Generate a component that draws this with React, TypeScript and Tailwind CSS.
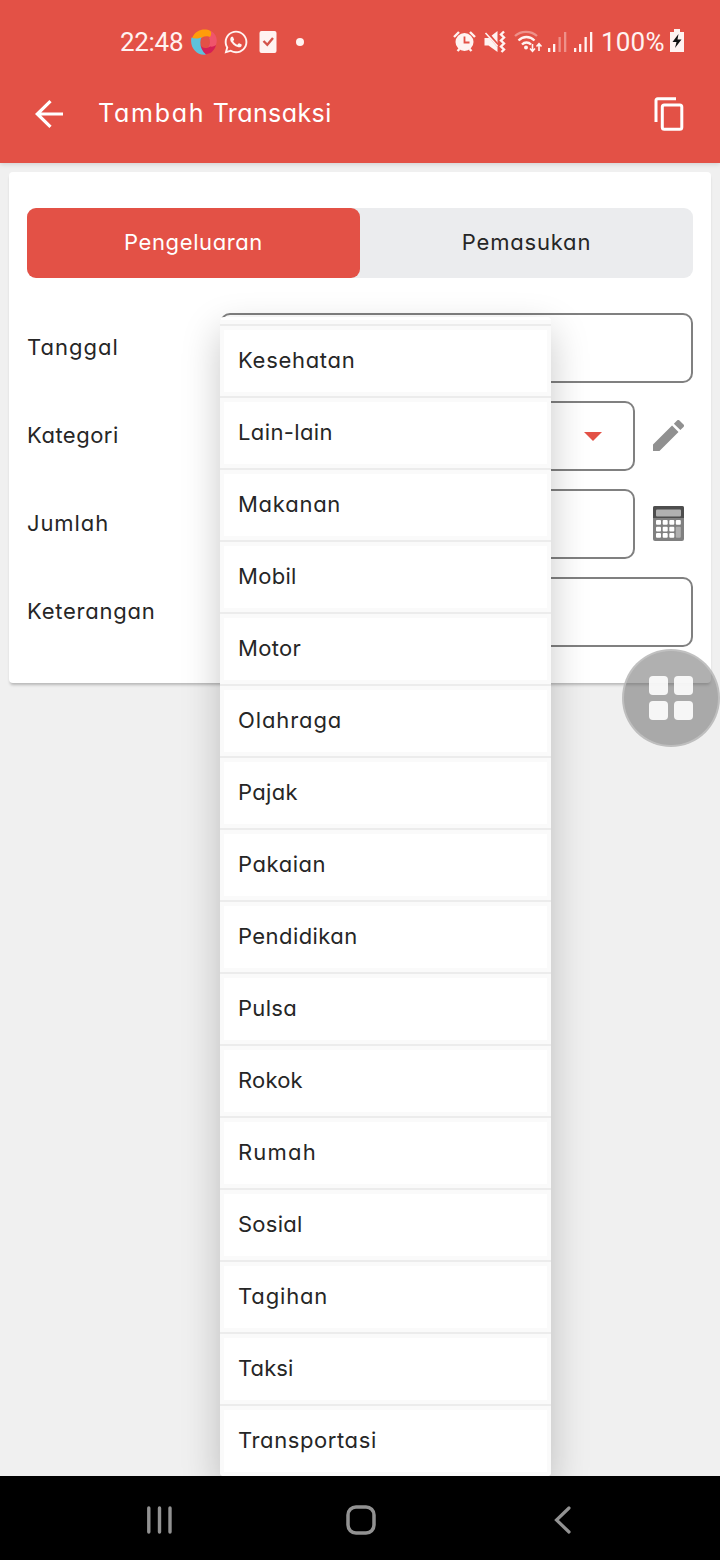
import React from "react";
import { FaWhatsapp } from "react-icons/fa";

type Entry = { name: string; track: string };

const categories: Entry[] = [
  { name: "Kesehatan", track: "tracking-[0.7px]" },
  { name: "Lain-lain", track: "tracking-[0.38px]" },
  { name: "Makanan", track: "tracking-[0.75px]" },
  { name: "Mobil", track: "tracking-[0.3px]" },
  { name: "Motor", track: "tracking-[0.3px]" },
  { name: "Olahraga", track: "tracking-[0.9px]" },
  { name: "Pajak", track: "tracking-[0.3px]" },
  { name: "Pakaian", track: "tracking-[0.55px]" },
  { name: "Pendidikan", track: "tracking-[0.43px]" },
  { name: "Pulsa", track: "tracking-[0.3px]" },
  { name: "Rokok", track: "tracking-[0.2px]" },
  { name: "Rumah", track: "tracking-[1.2px]" },
  { name: "Sosial", track: "tracking-[0.25px]" },
  { name: "Tagihan", track: "tracking-[0.85px]" },
  { name: "Taksi", track: "tracking-[0.1px]" },
  { name: "Transportasi", track: "tracking-[0.6px]" },
];

function StatusBar() {
  return (
    <div className="flex h-[83px] items-center pl-[120px] font-[Roboto,sans-serif] text-[26px] font-normal leading-none text-[#fff3f1]">
      <span className="w-[71px] tracking-[-0.3px]">22:48</span>
      <svg className="h-[26px] w-[26px] shrink-0" viewBox="0 0 26 26">
        <path d="M1 9C4 2 10 0 15 0.500c5 0.500 7 3.500 6 8.500-3-2-7-2.500-10-0.500-3 2-6 2.500-10 0.500Z" fill="#ff9d0a" />
        <path d="M20 2c5 3 7 8 5 14-2 3-6 3-8 2.500 2-2 2.500-6 1-9.500 2-1 2.500-4 2-7Z" fill="#f0546b" />
        <path d="M9 15c1 4 6 5.500 10 2.500 3 0.500 5-0.500 6-1.500-2 7-7 10-13 9-3-3-4-6-3-10Z" fill="#d51f55" />
        <path d="M0.500 8.500c3 1.500 7 1.500 10-0.500-2.500 6-1 13 4.500 17.500C7 27.500-2 19 0.500 8.500Z" fill="#5dc2dc" />
        <path d="M10.500 10c3-2 6-1.500 7.500 0.500 1 3 0 6-2 7.500-3 0-5-1-6-3Z" fill="#e35146" />
      </svg>
      <FaWhatsapp className="ml-[6px] h-[26px] w-[26px] shrink-0" />
      <svg className="ml-[10px] h-[22px] w-[19px] shrink-0" viewBox="0 0 19 22">
        <rect x="0.500" width="17" height="22" rx="2" fill="#fff3f1" />
        <path d="M4.500 10l3.800 3.800L14 7" fill="none" stroke="#d4544b" strokeWidth="2.4" />
      </svg>
      <span className="ml-[18px] h-2 w-2 shrink-0 rounded-full bg-[#fff3f1]" />
      <svg className="ml-[149px] h-[24px] w-[143px] shrink-0" viewBox="453 29 143 24" fill="#fff3f1">
        <circle cx="464.5" cy="41" r="9" />
        <path d="M454 36l5-5M475 36l-5-5M457.5 50l2-2M471.500 50l-2-2" stroke="#fff3f1" strokeWidth="2.400" />
        <path d="M464.500 35.500v6h5" fill="none" stroke="#e35146" strokeWidth="1.800" />
        <path d="M484.500 37h4l9-7v21l-9-6.500h-4Z" />
        <path d="M485 29.500l13 15" stroke="#e35146" strokeWidth="3.200" />
        <path d="M485.500 32l12 13" stroke="#fff3f1" strokeWidth="1.600" />
        <path d="M504 30.500l-3 3 3 3-3 3 3 3-3 3 3 3-2.500 2.500" fill="none" stroke="#fff3f1" strokeWidth="2.400" />
        <g fill="none" stroke="#fff3f1" strokeWidth="2.300">
          <path d="M515 35c6-5.500 16-5.500 22 0" opacity="0.4" />
          <path d="M518.500 39.500c4.500-4.700 11.500-4.700 16 0" />
          <path d="M522 43.500c2.500-2.700 6.500-2.700 9 0" />
          <path d="M532.500 43v7M530 47.500l2.500 2.700 2.500-2.700M539 50v-7M536.500 45.500l2.500-2.700 2.500 2.700" strokeWidth="1.600" />
        </g>
        <circle cx="526" cy="46.500" r="2" />
        <path d="M548 47h2.300v4H548ZM553 43h2.300v8H553Z" />
        <path d="M558.500 36h2.300v15h-2.300ZM564 31h2.300v20H564Z" opacity="0.4" />
        <path d="M574 47h2.300v4H574ZM579 43h2.300v8H579ZM584.500 36h2.300v15h-2.300ZM590 31h2.300v20H590Z" />
      </svg>
      <span className="ml-[5px] w-[69px] shrink-0 tracking-[0.2px]">100%</span>
      <svg className="h-[23px] w-[14px] shrink-0 -translate-y-px" viewBox="0 0 14 23">
        <path d="M4 0h6v3h4v20H0V3h4Z" fill="#fff3f1" />
        <path d="M8.500 5L2.500 13h4L5 19l6.500-8.500h-4Z" fill="#111" />
      </svg>
    </div>
  );
}

function AppBar() {
  return (
    <div className="flex h-[80px] items-center pb-[19px] pl-[35px] pr-[36px] text-white">
      <svg className="h-[28px] w-[28px]" viewBox="0 0 28 28" fill="none" stroke="white" strokeWidth="3.200">
        <path d="M28 14H3M15.500 1.200L2.300 14l13.200 12.800" />
      </svg>
      <h1 className="ml-[35px] flex-1 text-[25px]">
        <span className="tracking-[1.75px]">Tambah</span>
        <span className="tracking-[0.4px]"> Transaksi</span>
      </h1>
      <svg className="h-[34px] w-[30px]" viewBox="0 0 30 34" fill="none" stroke="white" strokeWidth="3">
        <path d="M2 25V3.500Q2 1.800 3.700 1.800H22" />
        <rect x="8.300" y="8" width="19.500" height="24.300" rx="2" />
      </svg>
    </div>
  );
}

function Field({ label, track, children }: { label: string; track: string; children?: React.ReactNode }) {
  return (
    <div className="flex h-[70px] items-center">
      <label className={`w-[193px] shrink-0 pb-[2px] ${track}`}>{label}</label>
      <div className="flex h-full flex-1 items-center justify-end rounded-[10px] border-2 border-[#808080] pr-[31px]">
        {label === "Kategori" && (
          <svg className="h-[9px] w-[18px]" viewBox="0 0 18 9">
            <path d="M0 0h18L9 9Z" fill="#e35146" />
          </svg>
        )}
      </div>
      {children}
    </div>
  );
}

function PencilIcon() {
  return (
    <svg className="mb-[1px] ml-[18px] mr-[9px] h-[31px] w-[31px] shrink-0" viewBox="3 3 18 18" fill="#909090">
      <path d="M3 17.250V21h3.750L17.810 9.940l-3.750-3.750L3 17.250zM20.710 7.040a1 1 0 0 0 0-1.410l-2.340-2.340a1 1 0 0 0-1.410 0l-1.830 1.830 3.750 3.750 1.830-1.830z" />
    </svg>
  );
}

function CalculatorIcon() {
  return (
    <svg className="mb-[1px] ml-[18px] mr-[9px] h-[35px] w-[31px] shrink-0" viewBox="0 0 31 35">
      <rect width="31" height="35" rx="2" fill="#808080" />
      <path d="M0 12V2Q0 0 2 0h27q2 0 2 2v10Z" fill="#4d4d4d" />
      <rect x="3" y="3.500" width="25" height="7" rx="1" fill="#b0b0b0" />
      <g fill="#fff">
        {[14, 20.7, 27].map((y) =>
          [3, 9.700, 16.300, 22.800].map((x) =>
            x > 20 && y > 15 ? null : <rect key={`${x}-${y}`} x={x} y={y} width="5" height="4.800" rx="1" />
          )
        )}
      </g>
      <rect x="22.800" y="20.700" width="5" height="11" rx="1" fill="#b0b0b0" />
    </svg>
  );
}

function CategoryMenu() {
  return (
    <ul className="absolute left-[220px] top-[154px] w-[331px] overflow-hidden rounded-[4px] bg-white shadow-[0_14px_38px_rgba(0,0,0,0.22)]">
      <li className="h-[7px] border-b-4 border-[#fafafa]" />
      {categories.map((c) => (
        <li key={c.name} className="h-[72px] border-t-2 border-[#ececec]">
          <div className={`flex h-[70px] items-center border-4 border-[#fafafa] pb-[3px] pl-[14px] ${c.track}`}>{c.name}</div>
        </li>
      ))}
    </ul>
  );
}

function AssistButton() {
  return (
    <div className="absolute left-[622px] top-[486px] grid h-[98px] w-[98px] grid-cols-[19px_19px] place-content-center gap-x-[6px] gap-y-[6px] rounded-full border-2 border-[#c8c8c8]/70 bg-[#686868]/52">
      <i className="h-[19px] w-[19px] rounded-[4px] bg-white/90" />
      <i className="h-[19px] w-[19px] rounded-[4px] bg-white/90" />
      <i className="h-[19px] w-[19px] rounded-[4px] bg-white/90" />
      <i className="h-[19px] w-[19px] rounded-[4px] bg-white/90" />
    </div>
  );
}

function NavigationBar() {
  return (
    <nav className="flex h-[84px] items-center bg-black pl-[146px]">
      <svg className="mt-[3px] h-[28px] w-[27px]" viewBox="0 0 27 28" fill="none" stroke="#929292" strokeWidth="3.400" strokeLinecap="round">
        <path d="M2.800 2v24M13.500 2v24M24 2v24" />
      </svg>
      <svg className="ml-[173px] mt-[3px] h-[30px] w-[30px]" viewBox="0 0 30 30" fill="none" stroke="#929292" strokeWidth="3.500">
        <rect x="2" y="2" width="26" height="26" rx="8" />
      </svg>
      <svg className="ml-[178px] mt-[3px] h-[28px] w-[17px]" viewBox="0 0 17 28" fill="none" stroke="#929292" strokeWidth="3.200" strokeLinecap="round">
        <path d="M15 2L2.500 14 15 26" />
      </svg>
    </nav>
  );
}

export default function App() {
  return (
    <div className="flex h-[1560px] w-[720px] flex-col overflow-hidden bg-[#f0f0f0] font-[Inter,sans-serif] text-[22px] font-normal leading-none text-[#262626] [font-feature-settings:'cv11']">
      <header className="relative z-10 h-[163px] shrink-0 bg-[#e35146] shadow-[0_1px_5px_rgba(0,0,0,0.15)]">
        <StatusBar />
        <AppBar />
      </header>
      <main className="relative flex-1 overflow-hidden px-[9px] pt-[9px]">
        <section className="h-[511px] rounded-[4px] bg-white px-[18px] pt-[36px] shadow-[0_3px_3px_-1px_rgba(0,0,0,0.24)]">
          <div className="flex h-[70px] rounded-[9px] bg-[#ebecee]">
            <button className="flex-1 rounded-[9px] bg-[#e35146] pb-[2px] tracking-[0.6px] text-white">Pengeluaran</button>
            <button className="flex-1 pb-[2px] tracking-[0.8px]">Pemasukan</button>
          </div>
          <form className="mt-[35px] flex flex-col gap-[18px]">
            <Field label="Tanggal" track="tracking-[1px]" />
            <Field label="Kategori" track="tracking-[0.5px]">
              <PencilIcon />
            </Field>
            <Field label="Jumlah" track="tracking-[0.9px]">
              <CalculatorIcon />
            </Field>
            <Field label="Keterangan" track="tracking-[0.75px]" />
          </form>
        </section>
        <CategoryMenu />
        <AssistButton />
      </main>
      <NavigationBar />
    </div>
  );
}
